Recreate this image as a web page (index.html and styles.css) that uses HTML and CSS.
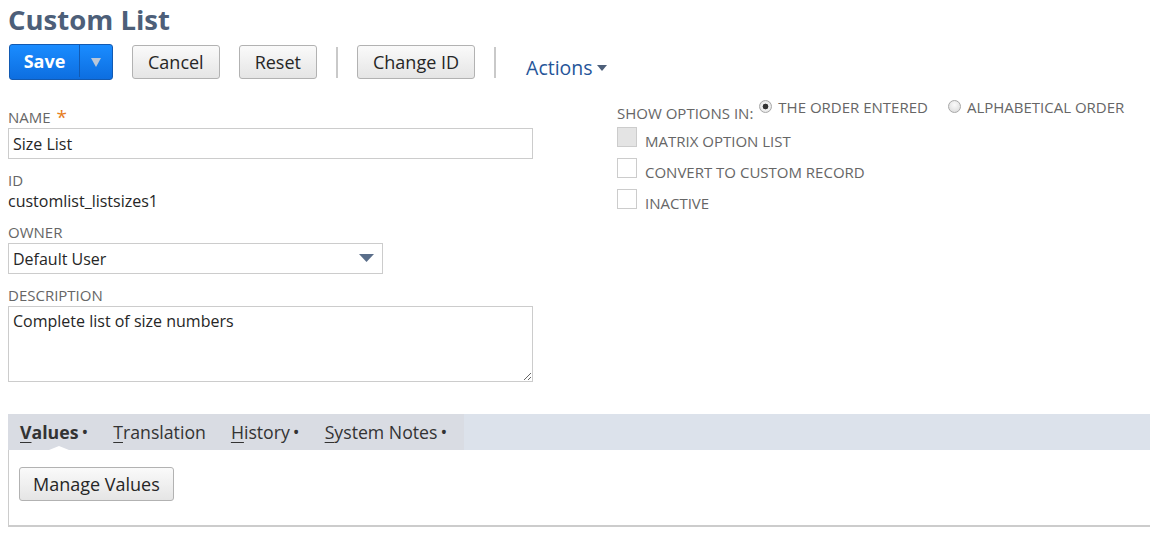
FILE: index.html
```html
<!DOCTYPE html>
<html lang="en">
<head>
    <meta charset="UTF-8">
    <title>Custom List</title>
    <link rel="stylesheet" href="styles.css">
</head>
<body>
    <h1 class="page-title">Custom List</h1>

    <div class="toolbar">
        <div class="btn-split">
            <button type="button" class="btn-primary">Save</button>
            <button type="button" class="btn-primary-arrow"><span class="tri"></span></button>
        </div>
        <button type="button" class="btn">Cancel</button>
        <button type="button" class="btn">Reset</button>
        <span class="tb-sep"></span>
        <button type="button" class="btn">Change ID</button>
        <span class="tb-sep"></span>
        <a class="actions">Actions<span class="caret"></span></a>
    </div>

    <div class="main">
        <div class="col-left">
            <div class="field">
                <label class="lbl">NAME <span class="req">*</span></label>
                <input type="text" class="txt txt-wide" value="Size List">
            </div>
            <div class="field">
                <label class="lbl">ID</label>
                <div class="val">customlist_listsizes1</div>
            </div>
            <div class="field">
                <label class="lbl">OWNER</label>
                <div class="select">
                    <span>Default User</span>
                    <svg width="15" height="9" viewBox="0 0 15 9"><path d="M0 0h15L7.5 8z" fill="#5a6e8a"/></svg>
                </div>
            </div>
            <div class="field">
                <label class="lbl">DESCRIPTION</label>
                <textarea class="txt txt-wide area">Complete list of size numbers</textarea>
            </div>
        </div>

        <div class="col-right">
            <div class="show-opts">
                <span class="lbl show-lbl">SHOW OPTIONS IN:</span>
                <span class="radio on"></span><span class="opt">THE ORDER ENTERED</span>
                <span class="radio"></span><span class="opt">ALPHABETICAL ORDER</span>
            </div>
            <div class="chk-row"><span class="chk disabled"></span><span class="opt">MATRIX OPTION LIST</span></div>
            <div class="chk-row"><span class="chk"></span><span class="opt">CONVERT TO CUSTOM RECORD</span></div>
            <div class="chk-row"><span class="chk"></span><span class="opt">INACTIVE</span></div>
        </div>
    </div>

    <div class="tabs">
        <div class="tab-list">
            <span class="tab active"><u>V</u>alues<span class="dot">&bull;</span></span>
            <span class="tab"><u>T</u>ranslation</span>
            <span class="tab"><u>H</u>istory<span class="dot">&bull;</span></span>
            <span class="tab"><u>S</u>ystem Notes<span class="dot">&bull;</span></span>
        </div>
    </div>
    <div class="tab-panel">
        <button type="button" class="btn btn-manage">Manage Values</button>
    </div>
</body>
</html>
```

FILE: styles.css
```css
body {
    font-family: "Open Sans", Arial, sans-serif;
    margin: 0;
    padding: 0 0 0 8px;
    color: #262626;
    background: #fff;
}
.page-title {
    font-size: 27.5px;
    font-weight: bold;
    color: #4d5f79;
    margin: 0;
    padding-top: 2px;
    line-height: 36px;
}
.toolbar {
    display: flex;
    align-items: center;
    margin-top: 7px;
    height: 34px;
}
.btn {
    font-family: inherit;
    font-size: 18px;
    color: #262626;
    background: linear-gradient(#fafafa, #e5e5e5);
    border: 1px solid #b2b2b2;
    border-radius: 3px;
    height: 34px;
    padding: 0 15px;
    margin-right: 19px;
}
.btn-split {
    display: flex;
    height: 34px;
    margin-left: 1px;
    margin-right: 19px;
    border: 1px solid #125ab2;
    border-radius: 3px;
    overflow: hidden;
    background: linear-gradient(#1a8cff, #0d6ee0);
}
.btn-primary,
.btn-primary-arrow {
    font-family: inherit;
    border: none;
    background: none;
    color: #fff;
    font-weight: bold;
    font-size: 18px;
    height: 32px;
    padding: 0;
}
.btn-primary {
    width: 69px;
}
.btn-primary-arrow {
    width: 33px;
    border-left: 1px solid #125ab2;
}
.tri {
    display: inline-block;
    border-left: 5px solid transparent;
    border-right: 5px solid transparent;
    border-top: 9px solid #b9c7d9;
    vertical-align: 1px;
}
.tb-sep {
    width: 2px;
    height: 31px;
    background: #c9c9c9;
    margin-right: 19px;
}
.actions {
    font-size: 19.5px;
    color: #255599;
    margin-left: 11px;
    margin-top: 10px;
}
.caret {
    display: inline-block;
    width: 0;
    height: 0;
    border-left: 5px solid transparent;
    border-right: 5px solid transparent;
    border-top: 6px solid #4d5f79;
    margin-left: 4px;
    vertical-align: 4px;
}
.main {
    display: flex;
    margin-top: 18px;
}
.col-left {
    width: 609px;
    padding-top: 10px;
}
.field {
    display: flex;
    flex-direction: column;
    margin-bottom: 11px;
}
.lbl {
    font-size: 15px;
    color: #666;
    line-height: 20px;
    height: 20px;
    margin-bottom: 1px;
}
.req {
    color: #e67e22;
    font-size: 19px;
    margin-left: 2px;
    vertical-align: -1px;
}
.txt {
    font-family: inherit;
    font-size: 16px;
    color: #262626;
    border: 1px solid #ccc;
    padding: 0 4px;
    margin: 0;
    box-sizing: border-box;
}
.txt-wide {
    width: 525px;
    height: 31px;
}
.area {
    height: 76px;
    padding: 3px 4px;
    resize: vertical;
}
.val {
    font-size: 16px;
    line-height: 20px;
}
.select {
    display: flex;
    align-items: center;
    justify-content: space-between;
    width: 375px;
    height: 31px;
    box-sizing: border-box;
    border: 1px solid #ccc;
    padding: 0 8px 0 4px;
    font-size: 16px;
}
.show-opts {
    display: flex;
    align-items: flex-start;
    height: 27px;
}
.show-lbl {
    margin-top: 6px;
    margin-right: 6px;
}
.opt {
    font-size: 15px;
    color: #666;
    line-height: 20px;
}
.radio {
    display: inline-block;
    width: 13px;
    height: 13px;
    border: 1px solid #a8a8a8;
    border-radius: 50%;
    background: radial-gradient(circle at 50% 35%, #fafafa, #d8d8d8);
    margin: 3px 6px 0 0;
    box-sizing: border-box;
}
.radio.on {
    background: radial-gradient(circle, #333 0, #333 2.6px, #f5f5f5 3.2px, #d8d8d8 100%);
}
.show-opts .opt + .radio {
    margin-left: 20px;
}
.chk-row {
    display: flex;
    align-items: flex-start;
    height: 31px;
}
.chk {
    width: 20px;
    height: 20px;
    box-sizing: border-box;
    border: 1px solid #ccc;
    background: #fff;
    margin: 3px 8px 0 0;
}
.chk.disabled {
    background: #e4e4e4;
}
.chk-row .opt {
    margin-top: 7px;
}
.tabs {
    margin-top: 21px;
    background: #dce2eb;
    height: 36px;
}
.tab-list {
    display: inline-flex;
    align-items: center;
    height: 36px;
    background: #d9dce3;
    padding: 0 17px 0 12px;
    position: relative;
}
.tab {
    font-size: 17.7px;
    color: #333;
    margin-right: 25px;
}
.tab:last-child {
    margin-right: 0;
}
.tab u {
    text-underline-offset: 3px;
}
.tab.active {
    font-weight: bold;
}
.tab-list::after {
    content: "";
    position: absolute;
    left: 41px;
    bottom: 0;
    border-left: 10px solid transparent;
    border-right: 10px solid transparent;
    border-bottom: 4px solid #fff;
}
.dot {
    font-weight: normal;
    font-size: 18px;
    margin-left: 3px;
}
.tab-panel {
    border-left: 1px solid #ccc;
    border-bottom: 2px solid #ccc;
    height: 77px;
    padding: 17px 0 0 10px;
    box-sizing: border-box;
}
.btn-manage {
    margin: 0;
    padding: 0 13px;
}
```
